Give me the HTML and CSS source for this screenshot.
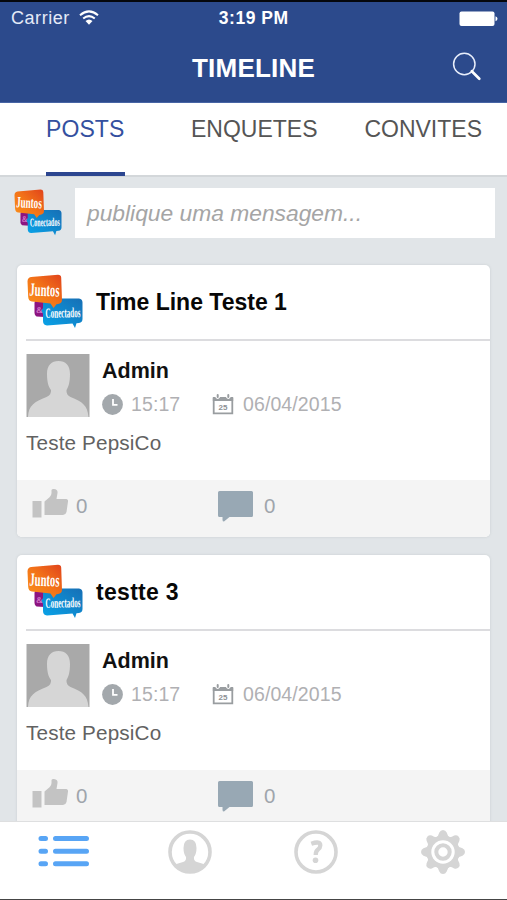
FILE: index.html
```html
<!DOCTYPE html>
<html lang="pt-BR">
<head>
<meta charset="utf-8">
<title>Timeline</title>
<link rel="stylesheet" href="styles.css">
</head>
<body>
<svg class="defs" aria-hidden="true">
  <defs>
    <linearGradient id="orange" x1="0" y1="1" x2="1" y2="0"><stop offset="0" stop-color="#fb921b"/><stop offset=".5" stop-color="#f37418"/><stop offset="1" stop-color="#e0431c"/></linearGradient>
    <linearGradient id="blue" x1="0" y1="1" x2="1" y2="0"><stop offset="0" stop-color="#08a5ea"/><stop offset="1" stop-color="#176fb5"/></linearGradient>
    <symbol id="logo" viewBox="0 0 56 55">
      <path d="M8.500 27 L18 26 V43 L9.500 42.500 Q7.500 41.500 7.500 39 V29 Q7.500 27.500 8.500 27Z" fill="#8d1580"/>
      <text x="9" y="38.500" class="logo-amp">&amp;</text>
      <path d="M19 24.500 L52 24.500 Q55.500 25 55.500 28.500 V45 Q55.500 48.500 52 49 L49.500 49.200 L48 54 L45.500 49.500 L20 51.500 Q16 51 16 47 V40 L14.500 36.500 L16 34 V28 Q16 25 19 24.500Z" fill="url(#blue)"/>
      <path d="M4 3 L31 .7 Q34 .7 34.200 3.500 L35 26 Q35 29.500 31 30 L29.500 30.300 L26.500 34 L23.500 29.500 L5 27.500 Q1.500 27 1.200 23 L.5 7.500 Q.5 3.500 4 3Z" fill="url(#orange)"/>
      <text x="2.500" y="22" textLength="30" lengthAdjust="spacingAndGlyphs" transform="rotate(2 17 16)" class="logo-top">Juntos</text>
      <text x="18.500" y="43.500" textLength="35" lengthAdjust="spacingAndGlyphs" transform="rotate(-1 36 40)" class="logo-bottom">Conectados</text>
    </symbol>
    <symbol id="avatar" viewBox="0 0 63 63">
      <path fill="#a9a9a9" d="M0 0h63v63H0z"/>
      <path fill="#d6d6d6" d="M1.500 63C2 51 8 48 20 43Q25 41 24.500 36C22 33 20.500 28 20.500 20C20.500 11 25 7 32 7S43.500 11 43.500 20C43.500 28 42 33 40 36Q39.500 41 44 43C56 48 61 51 62 63Z"/>
    </symbol>
    <symbol id="clock" viewBox="0 0 21 21">
      <circle cx="10.500" cy="10.500" r="10.400" fill="#a3a8ac"/>
      <path d="M11 5v5.800h4.500" fill="none" stroke="#fff" stroke-width="1.800"/>
    </symbol>
    <symbol id="calendar" viewBox="0 0 22 21">
      <path d="M1.700 4v15.300h18.600V4" fill="none" stroke="#999da0" stroke-width="1.800"/>
      <path d="M.8 3h2.400q2.500 4 5 0h5.600q2.500 4 5 0h2.400v4H.8Z" fill="#999da0"/>
      <path d="M5.700 1v2M16.300 1v2" stroke="#999da0" stroke-width="2" stroke-linecap="round"/>
      <text x="11" y="16.200" text-anchor="middle" class="calendar-day">25</text>
    </symbol>
    <symbol id="thumb" viewBox="0 0 37 30">
      <path fill="#c3c3c3" d="M.5 13h9v16.500h-9zM12.500 13.500L15.500 11Q19.500 8 19.500 5V2Q20 .8 22 1Q26 1.500 25.500 5L24.500 11H34.500Q36.500 11.500 36 13.500L34.500 24Q34 26.500 31 27H12.500Z"/>
    </symbol>
    <symbol id="comment" viewBox="0 0 35 31">
      <path fill="#98a8b4" d="M1.500 0h32q1.500 0 1.500 1.500v23q0 1.500-1.500 1.500H11.500l-5.500 4.500q-1.500 0-1.500-1.500V26H1.500Q0 26 0 24.500v-23Q0 0 1.500 0Z"/>
    </symbol>
  </defs>
</svg>

<div class="app">
  <header class="header">
    <div class="status">
      <span class="carrier">Carrier</span>
      <svg class="wifi" viewBox="0 0 20 15">
        <path d="M1 5.200Q10-2.500 19 5.200M4.200 8.600Q10 3.700 15.800 8.600" fill="none" stroke="#fff" stroke-width="2"/>
        <path d="M6.500 11Q10 8 13.500 11L10 14.700Z" fill="#fff"/>
      </svg>
      <span class="clock-time">3:19 PM</span>
      <svg class="battery" viewBox="0 0 39 16">
        <rect x=".5" y=".5" width="35" height="14.500" rx="2" fill="#fff"/>
        <path d="M36.500 5.200Q38.500 6 38.500 7.800T36.500 10.300Z" fill="#fff"/>
      </svg>
    </div>
    <div class="navbar">
      <h1 class="title">TIMELINE</h1>
      <svg class="search" viewBox="0 0 30 30">
        <circle cx="12.300" cy="12" r="10.700" fill="none" stroke="#e8eefb" stroke-width="1.500"/>
        <path d="M19.800 19.300L27.300 26.700" stroke="#fff" stroke-width="2.700" stroke-linecap="round"/>
      </svg>
    </div>
  </header>

  <nav class="tabs">
    <a class="tab tab-active">POSTS</a>
    <a class="tab">ENQUETES</a>
    <a class="tab">CONVITES</a>
  </nav>

  <main class="feed">
    <div class="composer">
      <svg class="composer-logo"><use href="#logo"/></svg>
      <div class="composer-input">publique uma mensagem...</div>
    </div>

    <article class="card">
      <div class="card-head">
        <svg class="card-logo"><use href="#logo"/></svg>
        <h2 class="card-title">Time Line Teste 1</h2>
      </div>
      <div class="card-body">
        <div class="author">
          <svg class="avatar"><use href="#avatar"/></svg>
          <div class="author-info">
            <div class="name">Admin</div>
            <div class="meta">
              <svg class="icon-clock"><use href="#clock"/></svg><span class="time">15:17</span>
              <svg class="icon-calendar"><use href="#calendar"/></svg><span class="date">06/04/2015</span>
            </div>
          </div>
        </div>
        <p class="message">Teste PepsiCo</p>
      </div>
      <div class="card-foot">
        <svg class="icon-thumb"><use href="#thumb"/></svg><span class="likes">0</span>
        <svg class="icon-comment"><use href="#comment"/></svg><span class="comments">0</span>
      </div>
    </article>

    <article class="card">
      <div class="card-head">
        <svg class="card-logo"><use href="#logo"/></svg>
        <h2 class="card-title card-title-short">testte 3</h2>
      </div>
      <div class="card-body">
        <div class="author">
          <svg class="avatar"><use href="#avatar"/></svg>
          <div class="author-info">
            <div class="name">Admin</div>
            <div class="meta">
              <svg class="icon-clock"><use href="#clock"/></svg><span class="time">15:17</span>
              <svg class="icon-calendar"><use href="#calendar"/></svg><span class="date">06/04/2015</span>
            </div>
          </div>
        </div>
        <p class="message">Teste PepsiCo</p>
      </div>
      <div class="card-foot">
        <svg class="icon-thumb"><use href="#thumb"/></svg><span class="likes">0</span>
        <svg class="icon-comment"><use href="#comment"/></svg><span class="comments">0</span>
      </div>
    </article>
  </main>

  <nav class="tabbar">
    <svg class="tabbar-list" viewBox="0 0 52 32">
      <path d="M3 3.500h4.500M17.500 3.500h31M3 16.200h4.500M17.500 16.200h31M3 28.700h4.500M17.500 28.700h31" stroke="#58a5f5" stroke-width="5" stroke-linecap="round"/>
    </svg>
    <svg class="tabbar-icon" viewBox="0 0 44 44">
      <defs><clipPath id="ring"><circle cx="22" cy="22" r="20"/></clipPath></defs>
      <circle cx="22" cy="22" r="20" fill="none" stroke="#d5d5d5" stroke-width="3.600"/>
      <path clip-path="url(#ring)" fill="#d5d5d5" d="M4 44V36Q9 33.500 15 32Q18.500 31 18 27Q15.500 24 15.500 18Q15.500 9.500 22 9.500T28.500 18Q28.500 24 26 27Q25.500 31 29 32Q35 33.500 40 36V44Z"/>
    </svg>
    <svg class="tabbar-icon" viewBox="0 0 44 44">
      <circle cx="22" cy="22" r="20" fill="none" stroke="#d5d5d5" stroke-width="3.600"/>
      <path d="M17.300 13.800Q26.500 10.500 26.300 15.500Q26.200 18 24 19.500Q21.800 21 21.700 25" fill="none" stroke="#d5d5d5" stroke-width="4.300"/>
      <circle cx="21.500" cy="30.200" r="2.800" fill="#d5d5d5"/>
    </svg>
    <svg class="tabbar-icon" viewBox="0 0 44 44">
      <g fill="#d5d5d5">
        <circle cx="22" cy="22" r="16.500"/>
        <path id="tooth" d="M14.500 8Q17.500 6.500 18.300 2.500Q19.500 0 22 0T25.700 2.500Q26.500 6.500 29.500 8L22 22Z"/>
        <use href="#tooth" transform="rotate(45 22 22)"/><use href="#tooth" transform="rotate(90 22 22)"/><use href="#tooth" transform="rotate(135 22 22)"/><use href="#tooth" transform="rotate(180 22 22)"/><use href="#tooth" transform="rotate(225 22 22)"/><use href="#tooth" transform="rotate(270 22 22)"/><use href="#tooth" transform="rotate(315 22 22)"/>
      </g>
      <circle cx="22" cy="22" r="11.700" fill="#fff"/>
      <circle cx="22" cy="22" r="6.700" fill="none" stroke="#d5d5d5" stroke-width="4"/>
    </svg>
  </nav>
</div>
</body>
</html>
```
FILE: styles.css
```css
* { box-sizing: border-box; }
body {
  margin: 0;
  font-family: "Liberation Sans", Arial, sans-serif;
  background: #fff;
}
svg { display: block; flex: none; }
.defs { position: absolute; width: 0; height: 0; }
h1, h2, p { margin: 0; }

.app {
  display: flex;
  flex-direction: column;
  height: 900px;
  overflow: hidden;
  border-top: 2px solid #05070c;
  border-bottom: 1px solid #454545;
}

.header { height: 101px; flex: none; background: #2c4a8c; color: #fff; border-bottom: 1px solid #4765a5; }
.status {
  display: grid;
  grid-template-columns: auto auto 1fr auto;
  align-items: center;
  height: 33px;
  padding: 0 9px 0 11px;
}
.carrier { font-size: 18px; letter-spacing: .55px; color: #e5ebf8; }
.wifi { width: 20px; height: 15px; margin-left: 9px; margin-top: -2px; }
.clock-time { font-size: 17.5px; font-weight: bold; letter-spacing: .5px; margin-left: 120px; }
.battery { width: 39px; height: 16px; }
.navbar {
  display: grid;
  grid-template-columns: 1fr auto 1fr;
  align-items: center;
  height: 67px;
}
.title { grid-column: 2; font-size: 26px; line-height: 30px; margin-top: -2px; letter-spacing: .2px; }
.search { grid-column: 3; justify-self: end; width: 30px; height: 30px; margin: -3px 25px 0 0; }

.tabs {
  display: flex;
  flex: none;
  height: 74px;
  padding: 0 25px 0 46px;
  border-bottom: 2px solid #d3d7da;
}
.tab { height: 73px; padding-top: 13px; font-size: 23px; line-height: 27px; color: #555; }
.tab + .tab { margin-left: 66px; }
.tab:last-child { margin-left: auto; }
.tab-active { width: 79px; letter-spacing: .1px; color: #3450a0; border-bottom: 4px solid #2c4690; }

.feed { flex: 1; min-height: 0; overflow: hidden; padding: 11px 17px 0; background: #e1e5e8; }
.composer { display: flex; height: 50px; margin: 0 -5px 27px -4px; }
.composer-logo { width: 50px; height: 47px; margin-top: 1px; }
.composer-input {
  flex: 1;
  margin-left: 12px;
  padding-left: 12px;
  background: #fff;
  color: #a5a5a5;
  font-size: 22.8px;
  font-style: italic;
  line-height: 50px;
}

.card {
  height: 272px;
  margin-bottom: 18px;
  border-radius: 5px;
  background: #fff;
  overflow: hidden;
  box-shadow: 0 0 2px 1px #d6dadd;
}
.card-head {
  display: flex;
  height: 76px;
  margin-left: 9px;
  border-bottom: 2px solid #dcdcdf;
}
.card-logo { width: 58px; height: 55px; margin-top: 9px; }
.card-title { margin-left: 12px; font-size: 23px; line-height: 75px; color: #070707; }
.card-title-short { letter-spacing: .3px; }
.card-body { height: 139px; padding: 13px 9px 0; }
.author { display: flex; }
.avatar { width: 64px; height: 63px; }
.author-info { margin-left: 12px; }
.name { font-size: 21.5px; font-weight: bold; line-height: 34px; color: #111; }
.meta { display: flex; align-items: center; height: 32px; color: #b0b0b3; font-size: 19.5px; letter-spacing: .1px; }
.icon-clock { width: 21px; height: 21px; }
.time { width: 81px; margin-left: 8px; }
.icon-calendar { width: 22px; height: 21px; }
.date { margin-left: 9px; }
.message { margin-top: 11px; font-size: 20.7px; line-height: 24px; letter-spacing: .15px; color: #626262; }
.card-foot {
  display: flex;
  height: 57px;
  padding: 9px 15px 0;
  background: #f4f4f4;
  color: #9fa5ac;
  font-size: 20.5px;
  line-height: 34px;
}
.icon-thumb { width: 37px; height: 30px; margin-top: -1px; }
.likes { width: 134px; margin-left: 7px; }
.icon-comment { width: 35px; height: 31px; margin: 2px 0 0 8px; }
.comments { margin-left: 11px; }

.tabbar {
  display: flex;
  justify-content: space-between;
  flex: none;
  height: 78px;
  padding: 8px 42px 0 38px;
  background: #fff;
  border-top: 1px solid #dedfe0;
}
.tabbar-list { width: 52px; height: 32px; margin: 5px -5px 0 0; }
.tabbar-icon { width: 44px; height: 44px; }

.logo-top, .logo-bottom, .logo-amp { fill: #fff; font-family: "Liberation Serif", serif; font-weight: bold; }
.logo-top { font-size: 18.5px; }
.logo-bottom { font-size: 14px; }
.logo-amp { font-size: 9px; fill: #d476c8; }
.calendar-day { font: bold 8px "Liberation Sans", sans-serif; fill: #8d9194; }
```
